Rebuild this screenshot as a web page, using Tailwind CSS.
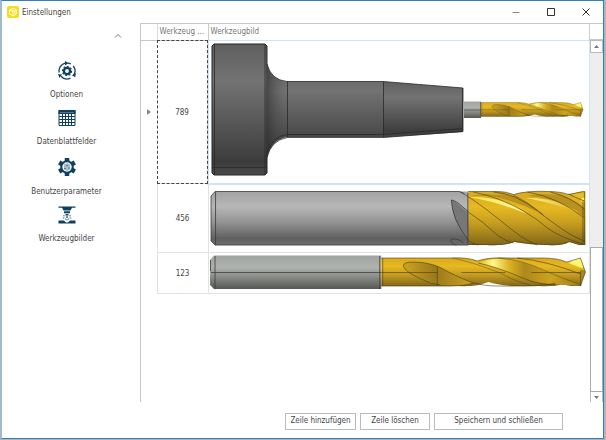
<!DOCTYPE html>
<html lang="de">
  <head>
    <meta charset="UTF-8" />
    <meta name="viewport" content="width=device-width, initial-scale=1.0" />
    <title>Einstellungen</title>
    <script src="https://cdn.jsdelivr.net/npm/@tailwindcss/browser@4"></script>
  </head>
  <body
    class="h-screen overflow-hidden bg-[#b4b4b4] pl-px pr-[2px] pb-px font-['DejaVu_Sans_Condensed','DejaVu_Sans',sans-serif] text-[8px] leading-[12px] text-[#444]"
  >
    <div
      class="flex h-full flex-col border border-[#2f80c3] border-l-[#8fbfe8] bg-white"
    >
      <header class="flex h-[22px] shrink-0 items-center pl-[5px] pr-[12px]">
        <svg class="size-[12px]" viewBox="0 0 12 12">
          <rect width="12" height="12" rx="2" fill="#f6dc1c" />
          <path
            d="M6 2 9.500 4v4L6 10 2.500 8V4zM2.500 4 6 6l3.500-2M6 6v4M4 3l4 2.500v3"
            fill="none"
            stroke="#fffbd0"
            stroke-width="1"
          />
        </svg>
        <h1 class="ml-[3px] grow pt-px">Einstellungen</h1>
        <div class="flex gap-[25px]">
          <button type="button" aria-label="Minimieren">
            <svg class="size-[10px]" viewBox="0 0 10 10">
              <path d="M1.500 5.500h7" stroke="#888" />
            </svg>
          </button>
          <button type="button" aria-label="Maximieren">
            <svg class="size-[10px]" viewBox="0 0 10 10">
              <path d="M1.500 1.500h7v7h-7z" fill="none" stroke="#333" />
            </svg>
          </button>
          <button type="button" aria-label="Schließen">
            <svg class="size-[10px]" viewBox="0 0 10 10">
              <path d="m1.500 1.500 7 7m0-7-7 7" stroke="#333" />
            </svg>
          </button>
        </div>
      </header>

      <div class="flex min-h-0 grow">
        <nav class="flex w-[138px] shrink-0 flex-col pr-[9px] pt-[8px]">
          <button
            type="button"
            aria-label="Einklappen"
            class="mr-[9px] self-end"
          >
            <svg class="h-[10px] w-[8px]" viewBox="0 0 8 10">
              <path d="m1 6.500 3-3 3 3" fill="none" stroke="#777" />
            </svg>
          </button>
          <a href="#optionen" class="mt-[20px] flex flex-col items-center">
            <svg class="size-[20px]" viewBox="0 0 20 20">
              <g fill="none" stroke="#0e4060">
                <path
                  d="M8 2.200a8 8 0 0 0-5.800 9.300M4 15.300a8 8 0 0 0 9.500 1.800M16.500 14.500a8 8 0 0 0-.2-9.500M13.800 3a8 8 0 0 0-3-.9"
                  stroke-width="1.300"
                />
                <circle cx="10" cy="10" r="3.100" stroke-width="2.400" />
                <circle
                  cx="10"
                  cy="10"
                  r="4.600"
                  stroke-width="1.200"
                  stroke-dasharray="1.800 1.700"
                />
              </g>
              <path
                d="m8 0 3.500 2L8 4.500zM1 13l4 .5-2.500 3.500zM18.800 12l-.5 4.200-3.400-2z"
                fill="#0e4060"
              />
            </svg>
            <span class="mt-[8px]">Optionen</span>
          </a>
          <a
            href="#datenblattfelder"
            class="mt-[8px] flex flex-col items-center"
          >
            <svg class="size-[18px]" viewBox="0 0 18 18">
              <path d="M.5 1h17v4H.5z" fill="#0e4060" />
              <path
                d="M1 1.500h16v15H1zM1 7.500h16M1 10.500h16M1 13.500h16M4.500 5v12M7.500 5v12M10.500 5v12M13.500 5v12"
                fill="none"
                stroke="#0e4060"
              />
              <path d="M2 3.500h14" stroke="#7b99aa" stroke-width=".6" />
            </svg>
            <span class="mt-[9px]">Datenblattfelder</span>
          </a>
          <a
            href="#benutzerparameter"
            class="mt-[9px] flex flex-col items-center"
          >
            <svg class="size-[20px]" viewBox="0 0 20 20">
              <path
                d="M10 1v18M2.200 5.500l15.600 9M2.200 14.500l15.600-9"
                stroke="#0e4060"
                stroke-width="4.500"
              />
              <circle cx="10" cy="10" r="6.800" fill="#0e4060" />
              <circle cx="10" cy="10" r="4.700" fill="#fff" />
              <path
                d="M8 6.800v6.400M10 6.200v7.600M12 6.800v6.400M7.300 11.500h1.400M9.300 8.500h1.400M11.300 11h1.400"
                stroke="#0e4060"
                stroke-width=".7"
              />
            </svg>
            <span class="mt-[9px]">Benutzerparameter</span>
          </a>
          <a
            href="#werkzeugbilder"
            class="mt-[8px] flex flex-col items-center"
          >
            <svg class="size-[18px]" viewBox="0 0 18 18">
              <path
                d="M.5.500h17v1.300h-3.500L12.500 4.500h-7L4 1.800H.5zM6 5.200h6v2H6zM7.500 8h3v1.400h-3zM8.300 10.300h1.400v1.600H8.300zM.5 14.500h5.500l2 2h2l2-2h5.500v3H.5z"
                fill="#0e4060"
              />
              <path
                d="M6 9v1.500M12 9v1.500M4.800 12h1.500M11.700 12h1.500M7 13h1M10 13h1M9 13v1.500"
                stroke="#0e4060"
                stroke-width=".8"
              />
            </svg>
            <span class="mt-[9px]">Werkzeugbilder</span>
          </a>
        </nav>

        <div class="flex min-w-0 grow flex-col">
          <!-- Werkzeugtabelle mit Bildlaufleiste -->
          <div
            class="flex min-h-0 grow overflow-hidden border-l border-t border-[#c8c8c8]"
          >
            <div class="min-w-0 grow">
              <table id="liste" class="w-full table-fixed border-collapse">
                <colgroup>
                  <col class="w-[16px]" />
                  <col class="w-[51px]" />
                  <col />
                </colgroup>
                <thead>
                  <tr class="h-[16px] border-b border-[#c8c8c8] text-[#777]">
                    <th class="border-r border-[#ddd]"></th>
                    <th
                      class="truncate border-r border-[#ccc] p-0 pl-[2px] text-left font-normal"
                    >
                      Werkzeug ...
                    </th>
                    <th
                      class="border-r border-[#ccc] p-0 pl-[2px] text-left font-normal"
                    >
                      Werkzeugbild
                    </th>
                  </tr>
                </thead>
                <tbody class="text-center">
                  <tr>
                    <td class="p-0">
                      <svg class="mx-auto h-[6px] w-[4px]" viewBox="0 0 4 6">
                        <path d="m0 0 4 3-4 3z" fill="#888" />
                      </svg>
                    </td>
                    <td
                      class="p-0 pt-[2px] outline-1 -outline-offset-1 outline-dashed outline-[#444]"
                    >
                      789
                    </td>
                    <td
                      class="border-b-2 border-l-2 border-r border-t border-[#cfe5f5] p-0"
                    >
                      <svg class="block h-auto w-full" viewBox="209 41 380 142">
                        <defs>
                          <linearGradient id="dark" x2="0" y2="1">
                            <stop offset="0" stop-color="#5f5f5f" />
                            <stop offset=".28" stop-color="#737373" />
                            <stop offset=".55" stop-color="#5c5c5c" />
                            <stop offset=".9" stop-color="#3c3c3c" />
                            <stop offset="1" stop-color="#4a4a4a" />
                          </linearGradient>
                          <linearGradient id="steel" x2="0" y2="1">
                            <stop offset="0" stop-color="#a3a3a3" />
                            <stop offset=".28" stop-color="#b7b7b7" />
                            <stop offset=".55" stop-color="#969696" />
                            <stop offset=".88" stop-color="#606060" />
                            <stop offset="1" stop-color="#6d6d6d" />
                          </linearGradient>
                          <linearGradient id="shank" x2="0" y2="1">
                            <stop offset="0" stop-color="#a0a4a0" />
                            <stop offset=".35" stop-color="#afb2ae" />
                            <stop offset=".6" stop-color="#8e918d" />
                            <stop offset="1" stop-color="#555753" />
                          </linearGradient>
                          <linearGradient id="gold" x2="0" y2="1">
                            <stop offset="0" stop-color="#d9ab1d" />
                            <stop offset=".3" stop-color="#e6b822" />
                            <stop offset=".6" stop-color="#c59c20" />
                            <stop offset="1" stop-color="#80661a" />
                          </linearGradient>
                          <linearGradient id="flute">
                            <stop offset="0" stop-color="#e0b522" />
                            <stop offset=".14" stop-color="#fff98a" />
                            <stop offset=".3" stop-color="#ddb222" />
                            <stop offset=".45" stop-color="#ad881c" />
                            <stop offset=".7" stop-color="#cda220" />
                            <stop offset="1" stop-color="#a07f1c" />
                          </linearGradient>
                          <linearGradient id="pocket">
                            <stop offset="0" stop-color="#cda422" />
                            <stop offset=".45" stop-color="#9b7a1a" />
                            <stop offset="1" stop-color="#cda321" />
                          </linearGradient>
                          <linearGradient id="fillet">
                            <stop offset="0" stop-color="#2e2e2e" />
                            <stop
                              offset="1"
                              stop-color="#555"
                              stop-opacity="0"
                            />
                          </linearGradient>
                          <!-- Spiralbohrer, 204 x 30 -->
                          <g id="drill">
                            <path
                              d="M0 1h70q15-1 26 3q12-4 30-3h35q15 0 24 4l7-1 7-3 5 14-5 14h-6q-7 0-11-2-10 3-25 2h-26q-15-1-24-4-12 5-29 4H0z"
                              fill="url(#gold)"
                            />
                            <path
                              d="M22 9q0-4 10-4 14 0 26 5 18 10 34 16-14 4-33 2-10-1-19-6-16-7-18-13z"
                              fill="url(#pocket)"
                            />
                            <path
                              d="M97 6q8-4 20-4 25 1 45 11 20 9 38 15-15 1-26-1-18 0-30-5-28-12-47-16z"
                              fill="url(#flute)"
                            />
                            <path d="M187 6l12-5 3 9-2 1z" fill="#fff66b" />
                            <path d="M199 13h4l1 2-5 13z" fill="#a8841c" />
                            <g
                              fill="none"
                              stroke="#4a3d14"
                              stroke-width=".6"
                            >
                              <path
                                d="M0 1h70q15-1 26 3M0 29h70q13 0 23-3M1.500 1v28M92 26q-16-6-34-16-12-5-26-5-10 0-10 4 2 6 18 13 9 5 19 6"
                              />
                              <path
                                d="M56 9v19M0 15.500h56M80 15.500h44M150 15.500h49M97 6q19 4 47 16 12 5 30 6M136 1q30 3 63 16M199 14v15M199 1l5 14-5 14"
                              />
                              <path
                                d="M71 1q20 4 48 15 16 9 30 12M117 1q25 2 45 12 20 9 38 15"
                                stroke-opacity=".7"
                              />
                              <path
                                d="M96 4q12-4 30-3h35q15 0 24 4l14-4M93 26q10 3 24 3h26q20 0 31-3"
                              />
                            </g>
                          </g>
                        </defs>
                        <path
                          d="M214 44h51l2 2v127l-2 2h-51l-2-2V46z"
                          fill="url(#dark)"
                          stroke="#242424"
                        />
                        <path
                          d="M267 64q4 16 20 17.500h96v55.500h-96q-16 3-20 21z"
                          fill="url(#dark)"
                        />
                        <path
                          d="M267 64q4 16 20 17.500V137q-16 3-20 21z"
                          fill="url(#fillet)"
                          opacity=".6"
                        />
                        <path
                          d="M383 81.500 463 88v44l-80 5.500z"
                          fill="url(#dark)"
                        />
                        <path
                          d="M214.500 44v131M265 45v129M212 167.500h55M287.500 81v56M383.500 82v55M267 64q4 16 20 17.500h96L463 88v43.500l-80 6h-96q-16 3-20 20M267 152q6-16 20-17.500h96l80-6M462.500 88v43"
                          fill="none"
                          stroke="#292929"
                          stroke-width=".8"
                        />
                        <path d="M464 101.500h17V118h-17z" fill="url(#shank)" />
                        <path
                          d="M464 110h17M480.500 102v16"
                          stroke="#555"
                          stroke-width=".8"
                        />
                        <use
                          href="#drill"
                          transform="translate(481 102) scale(.5)"
                        />
                      </svg>
                    </td>
                  </tr>
                  <tr>
                    <td class="p-0"></td>
                    <td class="border border-[#e2e2e2] p-0 pt-[2px]">456</td>
                    <td class="border border-[#e2e2e2] p-0">
                      <svg class="block h-auto w-full" viewBox="209 184 380 67">
                        <defs>
                          <linearGradient id="shine">
                            <stop offset="0" stop-color="#ffe94a" />
                            <stop offset=".45" stop-color="#fff79a" />
                            <stop offset="1" stop-color="#e0b422" />
                          </linearGradient>
                        </defs>
                        <path
                          d="M215 190.500h254V244H215l-4-4v-45z"
                          fill="url(#steel)"
                        />
                        <path
                          d="M468 190.500h30q8 0 15 3 14-4 35-3 12 0 20 3l12-3h5V244h-6l-10-3q-8 4-22 3-15 0-33-3-10 4-28 3h-18z"
                          fill="url(#gold)"
                        />
                        <path
                          d="M451 199q6 2 17 13v27q-16-18-17-40z"
                          fill="#777"
                        />
                        <path
                          d="M493 191q14 1 24 6 12 6 20 14-16-8-34-13-14-4-33-3 10-3 33-1zM550 191q20 4 34 16v9q-14-10-27-15-14-5-30-6 12-3 32-1z"
                          fill="#b9911c"
                        />
                        <path
                          d="M469 196q34-1 58 17-26-11-58-17zM526 197q28-1 54 15-24-9-54-15z"
                          fill="url(#shine)"
                        />
                        <path d="M569 193l15-3v10q-8-4-15-7z" fill="#e8bb24" />
                        <path d="M581 197h4v4h-4z" fill="#fff36b" />
                        <g fill="none" stroke="#443a1e" stroke-width=".6">
                          <path
                            d="M468 190.500h30q8 0 15 3 14-4 35-3 12 0 20 3l16-3v53h-5l-10-3q-8 4-22 3-15 0-33-3-10 4-28 3h-18"
                          />
                          <path
                            d="M460 191q16 9 37 26 12 10 23 18 9 6 17 9M468 211q14 9 29 23 8 6 16 8M473 191q26 5 50 19 14 8 24 17 12 9 36 16M493 191q22 1 44 19 16 12 26 19 10 7 21 11M513 194q16 8 30 20M527 191q30 5 57 26M550 191q20 5 34 17M568 193q8 4 16 7M582.500 199v43M468 239q4 4 10 5"
                          />
                        </g>
                        <path
                          d="M211 195v45l4 4h253M211 195l4-4.500h244l5 2M215.500 191v53M467.500 192v51M451 199q1 20 17 40M451 199q5 0 17 12M451 238q7-1 12 4M451 238q-2 4 5 6"
                          fill="none"
                          stroke="#3c3c3c"
                          stroke-width=".8"
                        />
                      </svg>
                    </td>
                  </tr>
                  <tr>
                    <td class="p-0"></td>
                    <td class="border border-[#e2e2e2] p-0 pt-[2px]">123</td>
                    <td class="border border-[#e2e2e2] p-0">
                      <svg class="block h-auto w-full" viewBox="209 252 380 40">
                        <path
                          d="M214 254.500h167V288H214l-4-4v-25z"
                          fill="url(#shank)"
                        />
                        <path
                          d="M215 255v33M210.500 259v11M211 271.500h170M379.500 255v33"
                          stroke="#3f3f3f"
                          stroke-width=".8"
                        />
                        <use href="#drill" transform="translate(381 256)" />
                      </svg>
                    </td>
                  </tr>
                </tbody>
              </table>
            </div>
            <div
              class="flex w-[13px] shrink-0 flex-col bg-[#eee]"
              role="scrollbar"
              aria-label="Bildlauf"
              aria-controls="liste"
              aria-valuenow="0"
            >
              <div
                class="h-[16px] shrink-0 border-b border-[#c8c8c8] bg-white"
              ></div>
              <button
                type="button"
                aria-label="Nach oben"
                class="flex h-[13px] shrink-0 items-center justify-center border border-[#bbb] bg-white"
              >
                <svg class="h-[3px] w-[5px]" viewBox="0 0 5 3">
                  <path d="M0 3 2.500 0 5 3z" fill="#777" />
                </svg>
              </button>
              <div class="grow basis-[195px]"></div>
              <div
                class="grow basis-[146px] border border-[#aaa] bg-white"
              ></div>
              <button
                type="button"
                aria-label="Nach unten"
                class="flex h-[10px] shrink-0 items-center justify-center border-x border-[#bbb] bg-white"
              >
                <svg class="h-[3px] w-[5px]" viewBox="0 0 5 3">
                  <path d="m0 0 2.500 3L5 0z" fill="#777" />
                </svg>
              </button>
            </div>
          </div>

          <footer
            class="flex h-[36px] shrink-0 items-center justify-end gap-[4px] pr-[40px] pt-[2px]"
          >
            <button
              type="button"
              class="flex h-[17px] w-[71px] items-center justify-center border border-[#bbb]"
            >
              Zeile hinzufügen
            </button>
            <button
              type="button"
              class="flex h-[17px] w-[70px] items-center justify-center border border-[#bbb]"
            >
              Zeile löschen
            </button>
            <button
              type="button"
              class="flex h-[17px] w-[129px] items-center justify-center border border-[#bbb]"
            >
              Speichern und schließen
            </button>
          </footer>
        </div>
      </div>
    </div>
  </body>
</html>
